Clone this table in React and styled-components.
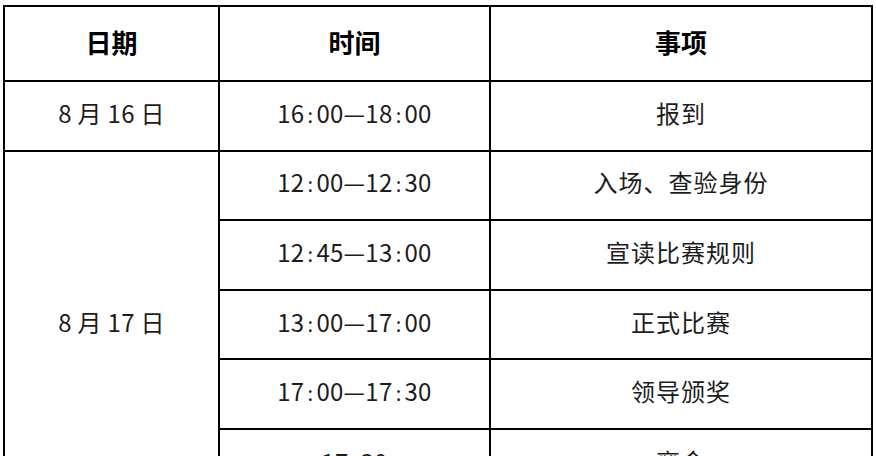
import React from "react";
import styled, { createGlobalStyle } from "styled-components";

const GlobalStyle = createGlobalStyle`
  html, body {
    margin: 0;
    padding: 0;
    background: #fff;
  }
  body {
    font-family: "Noto Sans CJK SC", "Noto Sans", sans-serif;
    color: #1c1c1c;
  }
`;

const Page = styled.div`
  padding: 5px 5px 0 3px;
  width: 876px;
  box-sizing: border-box;
  overflow: hidden;
  height: 456px;
`;

const Table = styled.table`
  border-collapse: collapse;
  table-layout: fixed;
  width: 868px;
`;

const HeadCell = styled.th`
  border: 2px solid #000;
  height: 69px;
  padding: 0 0 4px;
  font-size: 26px;
  font-weight: 700;
  color: #000;
  text-align: center;
  vertical-align: middle;
`;

const Cell = styled.td`
  border: 2px solid #000;
  height: ${(p) => (p.$tall ? "auto" : "62.6px")};
  padding: 0 0 5px;
  font-size: 24px;
  font-weight: 400;
  line-height: 1.2;
  text-align: center;
  vertical-align: middle;
  letter-spacing: ${(p) => (p.$mono ? "0.3px" : "1px")};
`;

const Colon = styled.span`
  display: inline-block;
  padding: 0 3px 0 3px;
  font-size: 20px;
`;

const Time = ({ value }) => {
  const parts = value.split(":");
  return parts.map((part, i) => (
    <React.Fragment key={i}>
      {i > 0 && <Colon>:</Colon>}
      {part}
    </React.Fragment>
  ));
};

const schedule = [
  {
    date: "8 月 16 日",
    items: [["16:00—18:00", "报到"]],
  },
  {
    date: "8 月 17 日",
    items: [
      ["12:00—12:30", "入场、查验身份"],
      ["12:45—13:00", "宣读比赛规则"],
      ["13:00—17:00", "正式比赛"],
      ["17:00—17:30", "领导颁奖"],
      ["17:30", "离会"],
    ],
  },
];

const App = () => {
  return (
    <>
      <GlobalStyle />
      <Page>
        <Table>
          <colgroup>
            <col style={{ width: 215 }} />
            <col style={{ width: 271 }} />
            <col style={{ width: 382 }} />
          </colgroup>
          <thead>
            <tr>
              <HeadCell>日期</HeadCell>
              <HeadCell>时间</HeadCell>
              <HeadCell>事项</HeadCell>
            </tr>
          </thead>
          <tbody>
            {schedule.map((day) =>
              day.items.map(([time, what], i) => (
                <tr key={day.date + time}>
                  {i === 0 && (
                    <Cell rowSpan={day.items.length} $tall $mono>
                      {day.date}
                    </Cell>
                  )}
                  <Cell $mono>
                    <Time value={time} />
                  </Cell>
                  <Cell>{what}</Cell>
                </tr>
              ))
            )}
          </tbody>
        </Table>
      </Page>
    </>
  );
};

export default App;
